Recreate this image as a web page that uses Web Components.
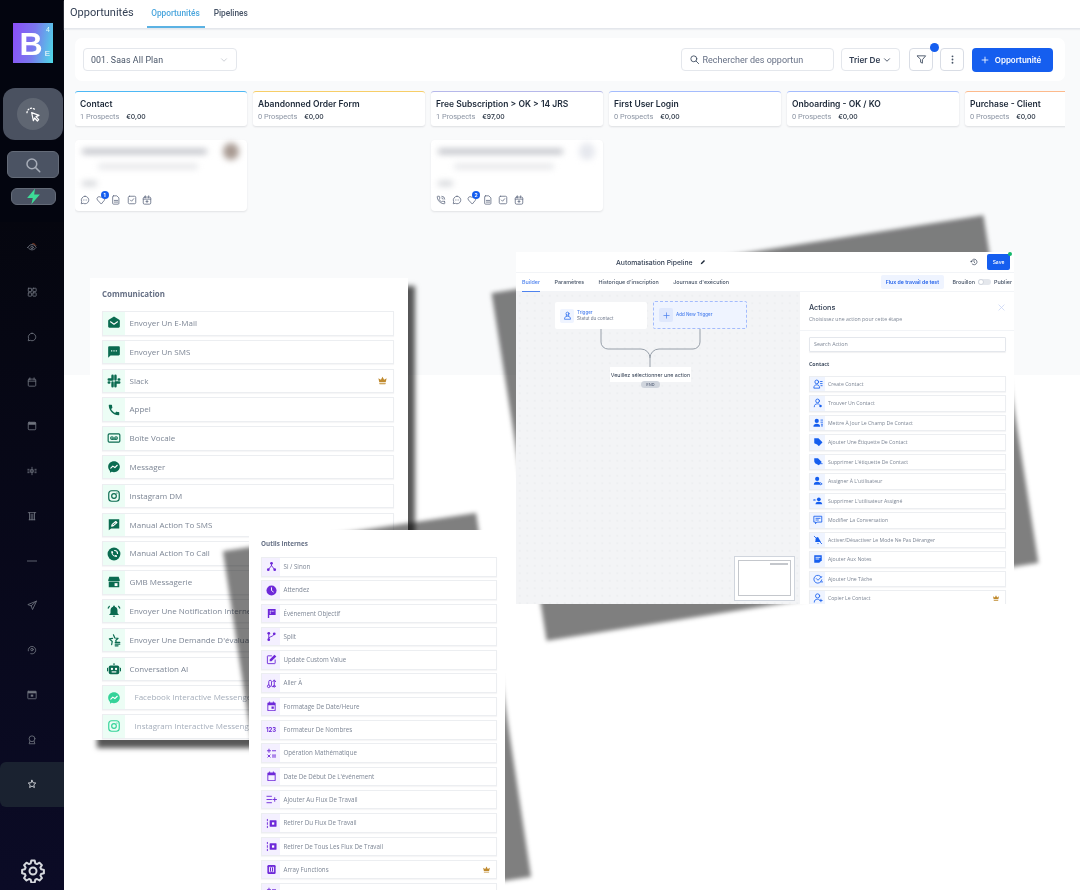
<!DOCTYPE html>
<html lang="fr"><head><meta charset="utf-8"><title>Opportunités</title>
<style>
html,body{margin:0;padding:0;width:1080px;height:890px;overflow:hidden;background:#fff;font-family:Inter,"Noto Sans",sans-serif}
app-shell{width:1080px;height:890px}
</style></head>
<body>
<app-shell>
  <side-bar slot="side"></side-bar>
  <top-header></top-header>
  <tool-bar></tool-bar>
  <stage-row></stage-row>
  <action-panel slot="float" style="--x:90px;--y:278px;--w:318px;--h:462px" title="Communication" kind="green"></action-panel>
  <float-shadow slot="float" style="--x:249px;--y:530px;--w:256px;--h:368px;--r:-8.6deg"></float-shadow>
  <action-panel slot="float" style="--x:249px;--y:530px;--w:256px;--h:360px" title="Outils internes" kind="purple"></action-panel>
  <float-shadow slot="float" style="--x:516px;--y:252px;--w:498px;--h:352px;--r:-9deg"></float-shadow>
  <flow-window slot="float"></flow-window>
</app-shell>
<script>
const S='fill="none" stroke="currentColor" stroke-width="2" stroke-linecap="round" stroke-linejoin="round"';
const W='fill="none" stroke="#fff" stroke-width="2" stroke-linecap="round" stroke-linejoin="round"';
const ICONS={
 email:`<path d="M22 8c0-.7-.4-1.400-1-1.700L12 1 3 6.300C2.400 6.650 2 7.300 2 8v10c0 1.100.9 2 2 2h16c1.100 0 2-.9 2-2z"/><path ${W} d="M6 10l6 4 6-4"/>`,
 sms:`<path d="M20 2H4c-1.100 0-2 .9-2 2v18l4-4h14c1.100 0 2-.9 2-2V4c0-1.100-.9-2-2-2zM9 11H7V9h2zm4 0h-2V9h2zm4 0h-2V9h2z"/>`,
 slack:`<g stroke="currentColor" stroke-width="4.200" stroke-linecap="round"><path d="M9.500 3v6.500M3 9.500h6"/><path d="M14.500 21v-6.500M21 14.500h-6"/><path d="M14.500 3v6.500M21 9.500h-1"/><path d="M9.500 21v-6.500M3 14.500h1"/></g>`,
 phone:`<path d="M20 15.400c-1.200 0-2.400-.2-3.500-.6a1 1 0 0 0-1 .2l-1.600 2c-2.800-1.300-5.500-3.900-6.900-6.800l2-1.700c.3-.3.3-.7.2-1-.4-1.100-.6-2.300-.6-3.500 0-.5-.4-1-1-1H4.200C3.600 3 3 3.200 3 4c0 9.300 7.700 17 17 17 .7 0 1-.6 1-1.200v-3.400c0-.5-.4-1-1-1z"/>`,
 voicemail:`<rect x="2" y="5" width="20" height="14" rx="2" ${S}/><circle cx="8.500" cy="12" r="2.200" ${S} stroke-width="1.600"/><circle cx="15.500" cy="12" r="2.200" ${S} stroke-width="1.600"/><path ${S} stroke-width="1.600" d="M8.500 14.200h7"/>`,
 messenger:`<path d="M12 2C6.400 2 2 6.100 2 11.600c0 2.900 1.200 5.400 3.100 7.100V22l3-1.700c1.200.3 2.500.5 3.900.5 5.600 0 10-4.100 10-9.200S17.600 2 12 2z"/><path ${W} d="M6.500 14l3.500-3.500 3.500 2.500 4-4"/>`,
 instagram:`<rect x="3" y="3" width="18" height="18" rx="5" ${S}/><circle cx="12" cy="12" r="4" ${S}/><circle cx="17" cy="7" r="1.200"/>`,
 manualsms:`<path d="M21 2H3v19l4-3h14z"/><path ${W} d="M8 14l1-3 6-5 2 2-6 5z" stroke-width="1.500"/>`,
 manualcall:`<circle cx="12" cy="12" r="11"/><path fill="#fff" transform="translate(5.500 5.500) scale(.55)" d="M20 15.400c-1.200 0-2.400-.2-3.500-.6a1 1 0 0 0-1 .2l-1.600 2c-2.800-1.300-5.500-3.900-6.900-6.800l2-1.700c.3-.3.3-.7.2-1-.4-1.100-.6-2.300-.6-3.500 0-.5-.4-1-1-1H4.200C3.600 3 3 3.200 3 4c0 9.300 7.700 17 17 17 .7 0 1-.6 1-1.200v-3.400c0-.5-.4-1-1-1z"/><path ${W} stroke-width="1.500" d="M13 6a5 5 0 0 1 5 5"/>`,
 gmb:`<path d="M4 3h16l2 6c0 1.500-1 2-2 2H4c-1 0-2-.5-2-2z"/><path d="M3 12h18v9H3z"/><rect x="13" y="14" width="5" height="5" fill="#fff"/>`,
 bell:`<path d="M12 22c1.100 0 2-.9 2-2h-4c0 1.100.9 2 2 2zm6-6v-5c0-3-1.600-5.600-4.500-6.300V4a1.500 1.500 0 0 0-3 0v.7C7.600 5.400 6 8 6 11v5l-2 2v1h16v-1z"/><path ${S} stroke-width="1.500" d="M4 4L2 7M20 4l2 3"/>`,
 starlist:`<path ${S} stroke-width="1.700" d="M11 3l2.400 5.500 5.600.5-4 3.800.6 2.200M8 20l1-5.500-5-4.500 5.500-.8"/><path ${S} stroke-width="1.700" d="M14 16h8M14 19h8M14 22h5"/>`,
 robot:`<path d="M11 2h2v3h-2z"/><rect x="3" y="6" width="18" height="15" rx="3"/><rect x="0" y="10" width="2" height="6"/><rect x="22" y="10" width="2" height="6"/><circle cx="8.500" cy="12" r="2" fill="#fff"/><circle cx="15.500" cy="12" r="2" fill="#fff"/><path d="M8 16h8v2H8z" fill="#fff"/>`,
 branch:`<circle cx="12" cy="5" r="3"/><circle cx="5" cy="19" r="3"/><circle cx="19" cy="19" r="3"/><path ${S} d="M12 5v5M12 10l-7 9M12 10l7 9"/>`,
 clock:`<circle cx="12" cy="12" r="11"/><path ${W} d="M12 6v6l4 3"/>`,
 flag:`<path d="M4 2h17v13H7v7H4z"/><path ${W} stroke-width="1.500" d="M9 7h1M13 7h1M17 7h0M9 11h1"/>`,
 split:`<circle cx="6" cy="5" r="3"/><circle cx="6" cy="19" r="3"/><circle cx="18" cy="6" r="3"/><path ${S} stroke-width="2.500" d="M6 5v14M18 6c0 6-8 5-12 9"/>`,
 editbox:`<path ${S} stroke-width="2.200" d="M20 13v7a1 1 0 0 1-1 1H4a1 1 0 0 1-1-1V5a1 1 0 0 1 1-1h8"/><path d="M18.500 1.500l4 4L12 16H8v-4z"/>`,
 goto:`<circle cx="6" cy="18" r="3" ${S}/><circle cx="18" cy="18" r="2" ${S}/><path ${S} stroke-width="2.200" d="M6 15V8a3 3 0 0 1 6 0v8a3 3 0 0 0 6 0V6M15 8l3-4 3 4"/>`,
 calfill:`<path d="M5 3h2V1h2v2h6V1h2v2h2a2 2 0 0 1 2 2v15a2 2 0 0 1-2 2H5a2 2 0 0 1-2-2V5a2 2 0 0 1 2-2zm0 6v11h14V9z"/><rect x="12" y="12" width="5" height="5"/>`,
 math:`<path ${S} stroke-width="2.500" d="M3 6h7M6.500 2.500v7M14 6h7M4 15l5 5M9 15l-5 5M14 15.500h7M14 19.500h7"/>`,
 cal:`<path d="M5 3h2V1h2v2h6V1h2v2h2a2 2 0 0 1 2 2v15a2 2 0 0 1-2 2H5a2 2 0 0 1-2-2V5a2 2 0 0 1 2-2zm0 6v11h14V9z"/>`,
 listadd:`<path ${S} stroke-width="2.500" d="M2 5h10M2 12h10M2 19h10M15 12h8M19 8v8"/>`,
 retire:`<rect x="8" y="5" width="15" height="14" rx="1"/><rect x="13" y="9.500" width="5" height="5" fill="#fff"/><path ${S} stroke-width="2.500" d="M3 3v3M3 10v4M3 18v3"/>`,
 array:`<rect x="3" y="2" width="18" height="20" rx="3"/><path ${W} stroke-width="1.500" d="M9 7H7.500v10H9M15 7h1.500v10H15M12 8v8"/>`,
 create:`<circle cx="9" cy="7" r="4.500" ${S}/><path ${S} d="M2 21c0-5 3-7 7-7s7 2 7 7zM18 6h4M18 11h4M19 16h3"/>`,
 find:`<circle cx="11" cy="7" r="4.500" ${S}/><path ${S} d="M3 21c0-5 3-7 8-7 2 0 3 .3 4 1"/><circle cx="18" cy="19" r="3"/>`,
 updatec:`<circle cx="9" cy="7" r="5"/><path d="M1 21c0-5 3-7 8-7s8 2 8 7z"/><path ${S} stroke-width="1.600" d="M19 5h4M19 10h4M20 15h3M20 19h3"/>`,
 tag:`<path d="M3 3h10l9 9c.6.6.6 1.400 0 2l-7 7c-.6.6-1.400.6-2 0l-3-3-7-3z"/>`,
 tagdel:`<path d="M3 3h9l9 9-7 8-9-5-2-4z"/><path ${S} stroke-width="2" d="M16 16h6"/>`,
 assign:`<circle cx="10" cy="7" r="5"/><path d="M2 21c0-5 3-7 8-7s8 2 8 7z"/><path ${S} stroke-width="1.800" d="M18 16l4 3-4 2"/>`,
 unassign:`<circle cx="14" cy="8" r="4.500"/><path d="M6 20c0-4 3-6 8-6s8 2 8 6z"/><path ${S} d="M2 8l3 3M5 8l-3 3"/>`,
 conv:`<path ${S} stroke-width="1.800" d="M3 3h18v14H9l-3 4v-4H3zM7 8h10M7 12h6"/>`,
 dnd:`<path d="M5 17c1-1 1-3 1-6 0-4 3-6 6-6l7 12zM3 21l18-2"/><path ${S} d="M3 3l18 18"/><path d="M10 19h4l-2 3z"/>`,
 notes:`<path d="M3 3h18v12l-6 6H3z"/><path ${W} stroke-width="1.800" d="M7 8h10M7 12h7"/>`,
 task:`<path ${S} d="M20 8a9.500 9.500 0 1 0 1 6"/><path ${S} d="M8 11l4 4 9-9"/><path ${S} d="M19 19h4"/>`,
 copyc:`<circle cx="11" cy="7" r="5" ${S}/><path ${S} d="M3 22c0-5 3-7 8-7 2 0 3 .3 4 1M19 15v6M16 18h6"/>`,
 crown:`<path d="M5 16L3 7l5.500 3.500L12 4l3.500 6.500L21 7l-2 9zm0 2h14v1c0 .6-.4 1-1 1H6c-.6 0-1-.4-1-1z"/>`,
 search:`<circle cx="10.500" cy="10.500" r="6.500" ${S}/><path ${S} d="M15.500 15.500L21 21"/>`,
 chev:`<path ${S} d="M6 9l6 6 6-6"/>`,
 filter:`<path ${S} d="M3 4h18l-7 8.500V20l-4-2v-5.500z"/>`,
 dots:`<circle cx="12" cy="5" r="2"/><circle cx="12" cy="12" r="2"/><circle cx="12" cy="19" r="2"/>`,
 plus:`<path ${S} d="M12 5v14M5 12h14"/>`,
 chat:`<path ${S} d="M12 3a9 9 0 0 0-8 13l-1 5 5-1a9 9 0 1 0 4-17z"/><path ${S} d="M8 12h0M12 12h0M16 12h0"/>`,
 heart:`<path ${S} d="M12 21L3.500 12a5 5 0 0 1 7-7l1.500 1 1.500-1a5 5 0 0 1 7 7z"/>`,
 doc:`<path ${S} d="M6 2h8l5 5v13a2 2 0 0 1-2 2H6a2 2 0 0 1-2-2V4a2 2 0 0 1 2-2zM8 13h8M8 17h8"/>`,
 check:`<rect x="3" y="3" width="18" height="18" rx="3" ${S}/><path ${S} d="M8 12l3 3 5-6"/>`,
 calplus:`<rect x="3" y="5" width="18" height="17" rx="3" ${S}/><path ${S} d="M8 2v5M16 2v5M3 10h18M12 13v5M9.500 15.500h5"/>`,
 call:`<path ${S} d="M20 15.400c-1.200 0-2.400-.2-3.500-.6a1 1 0 0 0-1 .2l-1.600 2c-2.800-1.300-5.500-3.900-6.900-6.800l2-1.700c.3-.3.3-.7.2-1-.4-1.100-.6-2.300-.6-3.500 0-.5-.4-1-1-1H4.200C3.600 3 3 3.200 3 4c0 9.300 7.700 17 17 17 .7 0 1-.6 1-1.200v-3.400c0-.5-.4-1-1-1zM14 3a7 7 0 0 1 7 7M14 7a3 3 0 0 1 3 3"/>`,
 cursor:`<path fill="none" stroke="#fff" stroke-width="1.800" stroke-linejoin="round" d="M10 10l11 4-4.500 2 4 4.500-2 2-4-4.500L12.500 22z"/><path ${S} stroke="#fff" stroke-width="1.800" stroke-dasharray="1.500 3" d="M3 10a7 7 0 0 1 11-5.500"/>`,
 bolt:`<path d="M14 1L3 14h8l-2 9 12-14h-8z"/>`,
 eye:`<path ${S} d="M2 13s4-7 10-7 10 7 10 7-4 6-10 6-10-6-10-6z"/><circle cx="12" cy="13" r="3" ${S}/><path fill="none" stroke="#b4552d" stroke-width="2" stroke-linecap="round" d="M14 4c3 0 5 1.500 7 4"/>`,
 grid:`<rect x="3" y="3" width="8" height="8" rx="1" ${S}/><rect x="14" y="3" width="8" height="8" rx="1" ${S}/><rect x="3" y="14" width="8" height="8" rx="1" ${S}/><rect x="14" y="14" width="8" height="8" rx="1" ${S}/>`,
 bubble:`<path ${S} d="M12 3a9 9 0 0 0-8 13l-1 5 5-1a9 9 0 1 0 4-17z"/>`,
 calnav:`<rect x="3" y="5" width="18" height="17" rx="2" ${S}/><path ${S} d="M7 2v5M17 2v5M3 10h18"/>`,
 box:`<rect x="3" y="3" width="18" height="18" rx="2" ${S}/><path d="M3 3h18v6H3z"/>`,
 spark:`<path ${S} d="M12 3v18M9 9h6v6H9zM2 8h3M2 12h3M2 16h3M19 8h3M19 12h3M19 16h3"/>`,
 trash:`<path ${S} d="M3 4h18M6 4v17M18 4v17M10 8v13M14 8v13M5 21h14"/>`,
 dash:`<path ${S} d="M1 12h22"/>`,
 send:`<path ${S} d="M22 3L2 11l8 3 3 8zM10 14L22 3"/>`,
 rotate:`<path ${S} d="M3 14a9 9 0 1 1 6 7"/><circle cx="12" cy="11" r="3" ${S}/>`,
 calbox:`<rect x="2" y="3" width="20" height="18" rx="1" ${S}/><path d="M2 3h20v5H2z"/><rect x="9" y="11" width="6" height="5"/>`,
 award:`<circle cx="12" cy="9" r="7" ${S}/><path ${S} d="M7 15l-2 6h14l-2-6"/>`,
 star:`<path ${S} d="M12 3l2.800 6 6.200.7-4.600 4.300 1.300 6.500L12 17l-5.700 3.500L7.600 14 3 9.700 9.200 9z"/>`,
 gear:`<path ${S} stroke-width="1.500" d="M10.300 2.500h3.400l.6 2.800 1.700.8 2.500-1.400 2.400 2.400-1.500 2.400.7 1.700 2.800.7v3.400l-2.800.6-.7 1.700 1.500 2.500-2.400 2.400-2.500-1.500-1.700.7-.6 2.800h-3.400l-.6-2.800-1.700-.7-2.500 1.500-2.400-2.400 1.500-2.500-.7-1.700-2.800-.6v-3.400l2.800-.7.7-1.700-1.500-2.400 2.400-2.400 2.500 1.400 1.700-.8z" transform="translate(0 -1)"/><circle cx="12" cy="12" r="3.500" ${S} stroke-width="1.500"/>`,
 pencil:`<path d="M3 21l1-5L16 4l4 4L8 20z"/>`,
 history:`<path ${S} d="M4 12a8.500 8.500 0 1 1 2.500 6M12 7v5l3 3M1.500 9.500L4 12l2.500-2.500"/>`,
 person2:`<circle cx="12" cy="7" r="4" ${S}/><path ${S} d="M4 21c0-5 3-7 8-7s8 2 8 7zM9 10v4M15 10v4"/>`,
 x:`<path ${S} d="M5 5l14 14M19 5L5 19"/>`
};
class Base extends HTMLElement{
  constructor(){super();this.attachShadow({mode:'open'});}
  connectedCallback(){ if(!this._r){this._r=1;this.render();} }
  set(html){this.shadowRoot.innerHTML=html;}
}
const def=(n,c)=>customElements.define(n,c);
def('x-icon',class extends Base{render(){
  this.set(`<style>:host{display:inline-flex;width:var(--s,12px);height:var(--s,12px);flex:none}svg{width:100%;height:100%;fill:currentColor;display:block}</style><svg viewBox="0 0 24 24">${ICONS[this.getAttribute('name')]||''}</svg>`);
}});
def('app-shell',class extends Base{render(){
  this.set(`<style>
  :host{display:flex;position:relative;overflow:hidden}
  .side{flex:none;width:64px;height:890px}
  main{flex:1;min-width:0;display:flex;flex-direction:column;background:linear-gradient(#f9fafb 375px,#fff 375px)}
  </style><div class="side"><slot name="side"></slot></div><main><slot></slot></main><slot name="float"></slot>`);
}});
def('side-bar',class extends Base{render(){
  const nav=['eye','grid','bubble','calnav','box','spark','trash','dash','send','rotate','calbox','award','star'];
  this.set(`<style>
  :host{display:flex;flex-direction:column;width:64px;height:890px;background:#0a0a2b;filter:blur(.3px)}
  .top{height:222px;background:#03050f;display:flex;flex-direction:column;align-items:center;box-sizing:border-box;padding-top:23px}
  .logo{position:relative;width:40px;height:40px;margin-left:2px;background:linear-gradient(100deg,#8b4df8,#7a78ee 50%,#4ddbe6);display:flex;padding:3px 0 0 6.500px;box-sizing:border-box;align-items:center;color:#fff;font:700 32px/37px "Liberation Sans",sans-serif}
  .logo i{position:absolute;font:400 7px/8px "Liberation Sans",sans-serif;color:#fff}
  .logo .e{right:3px;bottom:5px;font-size:8px;line-height:9px}.logo .f{right:3px;top:3px;color:#dff}
  .act{margin-top:25px;width:60px;height:52px;background:#4a5160;border-radius:12px;display:flex;align-items:center;justify-content:center;align-self:flex-end;margin-right:1px}
  .act span{width:32px;height:32px;border-radius:50%;background:#5f6672;display:flex;align-items:center;justify-content:center;color:#fff;--s:16px}
  .sea{margin-top:11px;margin-left:2px;width:52px;height:27px;background:#4b5363;border:1px solid #646b78;box-sizing:border-box;border-radius:6px;display:flex;align-items:center;justify-content:center;color:#a7adb8;--s:18px}
  .bol{margin-top:10px;margin-left:3px;width:45px;height:17px;background:#4b5363;border:1px solid #646b78;box-sizing:border-box;border-radius:6px;display:flex;align-items:center;justify-content:center;color:#3ddc97;--s:17px}
  .nav{width:45px;padding-top:3px;background:linear-gradient(#05060f,#0b0b26);display:flex;flex-direction:column;flex:1}
  .it{height:44.75px;display:flex;align-items:center;justify-content:center;color:#70757f;--s:10px;flex:none}
  .it.on{background:#1a2230;border-radius:6px 0 0 6px;color:#e5e7eb}
  .gear{position:absolute;left:21px;top:859px;color:#d5d8dd;--s:24px;display:flex}
  .wrap{flex:1;display:flex;position:relative}
  </style>
  <div class="top"><div class="logo">B<i class="e">E</i><i class="f">4</i></div>
   <div class="act"><span><x-icon name="cursor"></x-icon></span></div>
   <div class="sea"><x-icon name="search"></x-icon></div>
   <div class="bol"><x-icon name="bolt"></x-icon></div></div>
  <div class="wrap"><div class="nav">${nav.map((n,i)=>`<div class="it ${i==12?'on':''}"><x-icon name="${n}"></x-icon></div>`).join('')}</div></div>
  <div class="gear"><x-icon name="gear"></x-icon></div>`);
}});
def('top-header',class extends Base{render(){
  this.set(`<style>
  :host{display:flex;height:28px;background:#fff;border-bottom:1px solid #e4e7ec;box-shadow:0 1px 1px #eceef1;align-items:stretch;padding-left:6px;font-family:Roboto,sans-serif;filter:blur(.3px);flex:none}
  h1{margin:0;font:400 11px/26px Roboto,sans-serif;color:#344054;margin-right:13px}
  a{display:flex;align-items:center;height:26px;padding:0 4px;font:500 8.300px Roboto,sans-serif;color:#475467;margin-right:5px}
  a.on{color:#4ba6dd;border-bottom:2px solid #5bb2e3;padding-left:4.500px;padding-right:5px;margin-right:5px}
  </style><h1>Opportunités</h1><a class="on">Opportunités</a><a>Pipelines</a>`);
}});
def('tool-bar',class extends Base{render(){
  this.set(`<style>
  :host{display:flex;margin:9px 15px 0 11px;height:43px;box-sizing:border-box;padding:10px 12px 10px 8px;background:#fff;border-radius:7px;align-items:center;font-family:Inter,sans-serif;filter:blur(.3px);flex:none}
  .b{height:23px;box-sizing:border-box;border:1px solid #e4e7ec;border-radius:4px;background:#fff;display:flex;align-items:center;color:#475467;font-size:9px}
  .sel{width:154px;padding:0 7px;font-family:Roboto,sans-serif;font-size:8.800px;justify-content:space-between;letter-spacing:.1px}
  .sel x-icon{color:#c4c8cf;--s:10px}
  .sp{flex:1}
  .se{width:153px;padding-left:7px;gap:3px;color:#667085;font-family:Roboto,sans-serif;font-size:9px}
  .se x-icon{color:#475467;--s:11px}
  .tr{width:59px;margin-left:7.500px;padding:0 7px;justify-content:space-between;font:600 8.200px Inter,sans-serif;color:#344054}
  .tr x-icon{--s:10px}
  .ic{width:24px;justify-content:center;margin-left:9px;position:relative;color:#475467;--s:11px;border-color:#d9dde5}
  .ic.d{margin-left:7px}
  .dot{position:absolute;right:-7px;top:-6px;width:9px;height:9px;border-radius:50%;background:#155eef}
  button{margin-left:8px;width:81px;height:24px;border:0;border-radius:4px;background:#155eef;color:#fff;font:600 8px Inter,sans-serif;display:flex;align-items:center;justify-content:center;gap:5px;padding:0 4px 0 0;--s:10px}
  </style>
  <div class="b sel">001. Saas All Plan<x-icon name="chev"></x-icon></div><div class="sp"></div>
  <div class="b se"><x-icon name="search"></x-icon>Rechercher des opportun</div>
  <div class="b tr">Trier De<x-icon name="chev"></x-icon></div>
  <div class="b ic"><x-icon name="filter"></x-icon><i class="dot"></i></div>
  <div class="b ic d"><x-icon name="dots"></x-icon></div>
  <button><x-icon name="plus"></x-icon>Opportunité</button>`);
}});
def('stage-col',class extends Base{render(){
  this.set(`<style>
  :host{display:block;height:35px;box-sizing:border-box;background:#fff;border-top:1px solid var(--c);border-radius:3px;box-shadow:0 1px 2px rgba(16,24,40,.12);padding:6px 5px 0;overflow:hidden;white-space:nowrap}
  b{display:block;font:600 8.500px/12px Inter,sans-serif;color:#1d2939}
  p{margin:1px 0 0;font:400 7.400px/11px Roboto,sans-serif;color:#8a93a2;display:flex;gap:7px}
  p span{color:#1d2939;font-family:Inter,sans-serif;font-weight:500;font-size:6.800px}
  </style><b>${this.getAttribute('t')}</b><p>${this.getAttribute('p')} Prospects<span>${this.getAttribute('v')}</span></p>`);
}});
def('lead-card',class extends Base{render(){
  const icons=this.getAttribute('icons').split(',');const n=this.getAttribute('badge');
  this.set(`<style>
  :host{display:flex;flex-direction:column;height:71px;box-sizing:border-box;background:#fff;border-radius:4px;box-shadow:0 1px 2px rgba(16,24,40,.1);padding:0 5px 6px 5px}
  .bl{flex:1;position:relative;filter:blur(3px)}
  .bl i{display:block;background:#b9bbc2;height:5px;border-radius:2px;position:absolute}
  .l1{left:2px;top:9px;width:125px}.l2{left:18px;top:24px;width:100px;opacity:.4}.l3{left:2px;top:41px;width:15px;opacity:.65}
  .av{position:absolute;right:3px;top:3px;width:16px;height:17px;border-radius:50%;background:var(--av,#a89a92)}
  .ft{display:flex;gap:5.600px;color:#667085;--s:10px;align-items:center}
  .hb{position:relative;display:flex}
  .hb em{position:absolute;right:-3px;top:-4px;width:8px;height:8px;border-radius:50%;background:#155eef;color:#fff;font:700 5px/8px Inter,sans-serif;text-align:center}
  </style><div class="bl"><i class="l1"></i><i class="l2"></i><i class="l3"></i><span class="av"></span></div>
  <div class="ft">${icons.map(k=>k=='heart'?`<span class="hb"><x-icon name="heart"></x-icon><em>${n}</em></span>`:`<x-icon name="${k}"></x-icon>`).join('')}</div>`);
}});
def('stage-row',class extends Base{render(){
  const cols=[['Contact',1,'€0,00','#4db8f5'],['Abandonned Order Form',0,'€0,00','#f7ce68'],['Free Subscription > OK > 14 JRS',1,'€97,00','#b6b8ea'],['First User Login',0,'€0,00','#a4bcfd'],['Onboarding - OK / KO',0,'€0,00','#a4bcfd'],['Purchase - Client',0,'€0,00','#fdba8c']];
  const esc=s=>s.replace(/>/g,'&gt;');
  this.set(`<style>
  :host{display:grid;grid-template-columns:repeat(6,172px);column-gap:6px;row-gap:14px;width:990px;margin:10px 0 0 11px;overflow:hidden;padding-bottom:4px;filter:blur(.3px)}
  </style>
  ${cols.map(c=>`<stage-col t="${esc(c[0])}" p="${c[1]}" v="${c[2]}" style="--c:${c[3]}"></stage-col>`).join('')}
  <lead-card icons="chat,heart,doc,check,calplus" badge="1"></lead-card><div></div>
  <lead-card icons="call,chat,heart,doc,check,calplus" badge="2" style="--av:#e6e8ee"></lead-card>`);
}});
const PANELS={
 green:[['email','Envoyer Un E-Mail'],['sms','Envoyer Un SMS'],['slack','Slack',1],['phone','Appel'],['voicemail','Boîte Vocale'],['messenger','Messager'],['instagram','Instagram DM'],['manualsms','Manual Action To SMS'],['manualcall','Manual Action To Call'],['gmb','GMB Messagerie'],['bell','Envoyer Une Notification Interne'],['starlist','Envoyer Une Demande D\'évaluation'],['robot','Conversation AI'],['messenger','Facebook Interactive Messenger',0,1],['instagram','Instagram Interactive Messenger',0,1]],
 purple:[['branch','Si / Sinon'],['clock','Attendez'],['flag','Événement Objectif'],['split','Split'],['editbox','Update Custom Value'],['goto','Aller À'],['calfill','Formatage De Date/Heure'],['123','Formateur De Nombres'],['math','Opération Mathématique'],['cal','Date De Début De L\'événement'],['listadd','Ajouter Au Flux De Travail'],['retire','Retirer Du Flux De Travail'],['retire','Retirer De Tous Les Flux De Travail'],['array','Array Functions',1],['math','']],
 blue:[['create','Create Contact'],['find','Trouver Un Contact'],['updatec','Mettre À Jour Le Champ De Contact'],['tag','Ajouter Une Étiquette De Contact'],['tagdel','Supprimer L\'étiquette De Contact'],['assign','Assigner À L\'utilisateur'],['unassign','Supprimer L\'utilisateur Assigné'],['conv','Modifier La Conversation'],['dnd','Activer/Désactiver Le Mode Ne Pas Déranger'],['notes','Ajouter Aux Notes'],['task','Ajouter Une Tâche'],['copyc','Copier Le Contact',1]]
};
def('action-row',class extends Base{render(){
  const i=this.getAttribute('icon');
  const inner=i=='123'?`<b class="n">123</b>`:`<x-icon name="${i}"></x-icon>`;
  this.set(`<style>
  :host{display:flex;flex:none;height:var(--rh);box-sizing:border-box;border:1px solid #eceef1;background:#fff;box-shadow:0 1px 1px rgba(16,24,40,.04);align-items:stretch;white-space:nowrap;overflow:hidden}
  .c{flex:none;width:var(--cw);background:var(--cb);display:flex;align-items:center;justify-content:center;color:var(--fg);--s:var(--is)}
  .t{flex:1;padding-left:var(--tp);font:400 var(--fs)/var(--rl) "Open Sans",sans-serif;color:#7d8695;overflow:hidden}
  :host([dim]) .t{padding-left:calc(var(--tp) + 5px);color:#a5aebb}
  :host([dim]) .c{color:#34d399}
  .cr{align-self:center;color:#c08a2e;--s:var(--cs);margin-right:5px;display:flex}
  .n{font:700 var(--ns,6px) Inter,sans-serif}
  </style><div class="c">${inner}</div><div class="t"><slot></slot></div>${this.hasAttribute('crown')?'<span class="cr"><x-icon name="crown"></x-icon></span>':''}`);
}});
const rows=k=>PANELS[k].map(r=>`<action-row icon="${r[0]}" ${r[2]?'crown':''} ${r[3]?'dim':''}>${r[1]}</action-row>`).join('');
def('action-panel',class extends Base{render(){
  const k=this.getAttribute('kind');
  const vars=k=='green'?`--pt:11px;--pl:12px;--pr:14px;--ts:7.900px;--tb:11.500px;--tl:10.500px;--rh:24.500px;--rl:22.500px;--gap:4.310px;--cw:22px;--cb:#ecfdf5;--fg:#0a6b50;--is:14px;--fs:8px;--tp:4.500px;--cs:11px`
   :`--pt:9px;--pl:12px;--pr:8px;--ts:6.300px;--tb:9px;--tl:9px;--rh:19.500px;--rl:17.500px;--gap:3.810px;--cw:18px;--cb:#f4f0ff;--fg:#6d28d9;--is:11px;--fs:6.200px;--tp:3.500px;--cs:9px`;
  this.set(`<style>
  :host{position:absolute;left:var(--x);top:var(--y);width:var(--w);height:var(--h);box-sizing:border-box;background:#fff;${vars};padding:var(--pt) var(--pr) 0 var(--pl);overflow:hidden;filter:blur(.4px)}
  h3{margin:0 0 var(--tb);font:700 var(--ts)/var(--tl) "Open Sans",sans-serif;color:#667085}
  .l{display:flex;flex-direction:column;gap:var(--gap)}
  </style><h3>${this.getAttribute('title')}</h3><div class="l">${rows(k)}</div>`);
  if(k=='green'){this.style.overflow='visible';this.style.boxShadow='7px 8px 5px rgba(0,0,0,.66)';}
}});
def('float-shadow',class extends Base{render(){
  this.set(`<style>:host{position:absolute;left:var(--x);top:var(--y);width:var(--w);height:var(--h);background:rgba(0,0,0,.5);transform:rotate(var(--r));filter:blur(2.200px)}</style>`);
}});
def('flow-window',class extends Base{render(){
  this.set(`<style>
  :host{position:absolute;left:516px;top:252px;width:498px;height:352px;background:#fff;overflow:hidden;display:flex;flex-direction:column;font-family:Inter,sans-serif;filter:blur(.4px);--rh:16.500px;--rl:14.500px;--cw:15px;--cb:#eff4ff;--fg:#155eef;--is:10px;--fs:5.150px;--tp:3px;--cs:8px}
  .h{height:21px;flex:none;display:flex;align-items:center;border-bottom:1px solid #f2f4f7;position:relative;box-sizing:border-box;padding-left:100px}
  .h b{font:500 6.800px Inter,sans-serif;color:#344054}
  .h x-icon{margin-left:7px;--s:6px;color:#1d2939}
  .h .sp{flex:1}
  .h .hi{color:#344054;--s:8px;margin-right:9px}
  .save{width:23px;height:16px;margin:-1px 4px 0 0;background:#155eef;border-radius:2px;color:#fff;font:500 5px/16px Inter,sans-serif;text-align:center;position:relative}
  .save i{position:absolute;right:-2px;top:-2px;width:4px;height:4px;border-radius:50%;background:#12b76a}
  .t{height:19px;flex:none;display:flex;align-items:center;box-sizing:border-box;padding-left:6px;gap:14.500px;font:500 5.400px Inter,sans-serif;color:#475467;border-bottom:1px solid #f2f4f7}
  .t a{height:19px;line-height:19px;box-sizing:border-box}
  .t a.on{color:#4f83ee;border-bottom:1px solid #4f83ee}
  .t .sp{flex:1}
  .test{background:#eff4ff;color:#2563eb;font-weight:600;font-size:5.200px;height:14px;line-height:14px;width:63px;text-align:center;border-radius:2px;margin-right:-6px}
  .tg{display:flex;align-items:center;gap:3px;margin-right:2px}
  .tg u{width:13px;height:6px;border-radius:3px;background:#e4e7ec;position:relative;display:block}
  .tg u:after{content:"";position:absolute;left:0;top:0;width:6px;height:6px;border-radius:50%;background:#fff;border:.5px solid #d0d5dd;box-sizing:border-box}
  .b{flex:1;display:flex;min-height:0}
  .cv{width:284px;flex:none;position:relative;background-color:#f3f4f6;background-image:radial-gradient(#d3d6db .5px,transparent .7px);background-size:7.500px 7.500px}
  .n{position:absolute;box-sizing:border-box;border-radius:2px;display:flex;align-items:center;gap:3px;padding-left:5px;background:#fff;font:500 4.500px/6px Inter,sans-serif;color:#4f83ee}
  .n small{display:block;color:#667085;font-size:4.500px;font-weight:400}
  .n span{width:14px;height:14px;background:#eff4ff;border-radius:2px;display:flex;align-items:center;justify-content:center;--s:9px;flex:none;color:#2f6fed}
  .n1{left:39px;top:10px;width:92px;height:27px}
  .n2{left:137px;top:9px;width:94px;height:28px;background:#eff4ff;border:1px dashed #a4bcfd}
  .n2 span{background:#dfe8fd;color:#4f83ee}
  svg.ln{position:absolute;left:0;top:0;width:284px;height:100px}
  .lb{position:absolute;left:94px;top:75px;width:81px;height:15px;background:#fff;font:400 5.300px/16px Inter,sans-serif;color:#344054;text-align:center;white-space:nowrap}
  .end{position:absolute;left:125px;top:89px;width:19px;height:7px;border-radius:4px;background:#d0d5dd;color:#667085;font:500 4px/7px Inter,sans-serif;text-align:center}
  .mm{position:absolute;left:218px;top:264px;width:61px;height:45px;background:#fff;border:1px solid #d0d5dd;box-sizing:border-box;padding:3px}
  .mm div{border:1px solid #c4c7cc;height:34px;position:relative}
  .mm i{position:absolute;right:2px;top:2px;width:18px;height:2px;background:#c4c7cc}
  .ac{flex:1;background:#fff;display:flex;flex-direction:column;min-width:0}
  .ah{height:39px;flex:none;padding:11px 8px 0 9px;box-sizing:border-box;border-bottom:1px solid #f2f4f7;display:flex;justify-content:space-between}
  .ah b{display:block;font:500 7.300px/10px Inter,sans-serif;color:#344054}
  .ah small{display:block;font:400 5.200px/9px "Open Sans",sans-serif;color:#7d8695;margin-top:2px}
  .ah x-icon{color:#c7d3f4;--s:9px;margin-top:0}
  .s{margin:6px 8px 0 9px;height:15px;border:1px solid #e4e7ec;box-sizing:border-box;flex:none;border-radius:1px;font:400 5.300px/13px "Open Sans",sans-serif;color:#7d8695;padding-left:4px;box-shadow:0 1px 1px rgba(16,24,40,.06)}
  h4{margin:8px 0 0 9px;font:700 5.200px/8px "Open Sans",sans-serif;color:#475467;flex:none}
  .l{margin:7.500px 8px 0 9px;display:flex;flex-direction:column;gap:3px}
  </style>
  <div class="h"><b>Automatisation Pipeline</b><x-icon name="pencil"></x-icon><span class="sp"></span><x-icon class="hi" name="history"></x-icon><div class="save">Save<i></i></div></div>
  <div class="t"><a class="on">Builder</a><a>Paramètres</a><a>Historique d'inscription</a><a>Journaux d'exécution</a><span class="sp"></span><span class="test">Flux de travail de test</span><span class="tg" style="margin-left:0">Brouillon<u></u>Publier</span></div>
  <div class="b"><div class="cv">
    <svg class="ln" viewBox="0 0 284 100"><path d="M85 37v13a7 7 0 0 0 7 7h33a9 9 0 0 1 9 9v9M184 37v13a7 7 0 0 1-7 7h-34a9 9 0 0 0-9 9" fill="none" stroke="#98a0aa" stroke-width="1"/></svg>
    <div class="n n1"><span><x-icon name="person2"></x-icon></span><div>Trigger<small>Statut du contact</small></div></div>
    <div class="n n2"><span><x-icon name="plus"></x-icon></span><div>Add New Trigger</div></div>
    <div class="lb">Veuillez sélectionner une action</div><div class="end">END</div>
    <div class="mm"><div><i></i></div></div>
  </div>
  <div class="ac"><div class="ah"><div><b>Actions</b><small>Choisissez une action pour cette étape</small></div><x-icon name="x"></x-icon></div>
   <div class="s">Search Action</div><h4>Contact</h4><div class="l">${rows('blue')}</div></div></div>`);
}});
</script>
</body></html>
